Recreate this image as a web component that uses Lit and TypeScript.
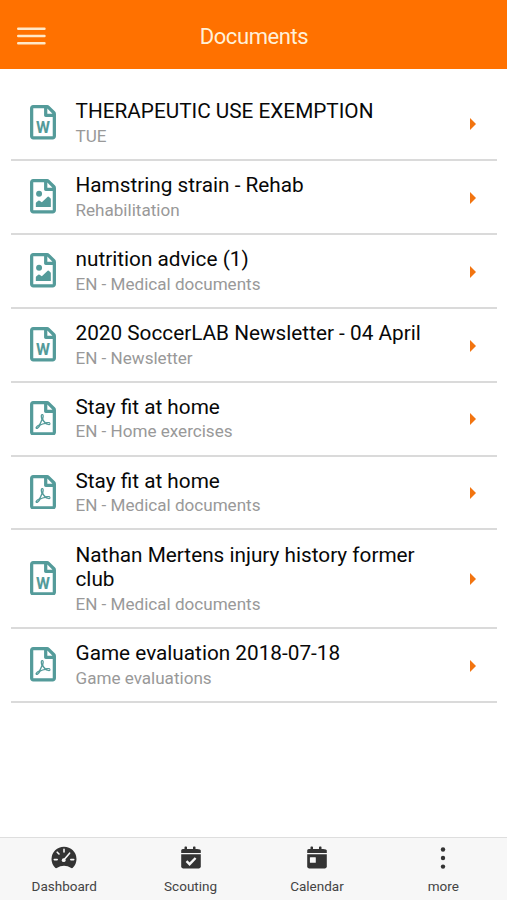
import { LitElement, html, svg, css } from "lit";
import { customElement, property } from "lit/decorators.js";

type Kind = "word" | "image" | "pdf";

const SHEET =
  "M369.9 97.9L286 14C277 5 264.8-.1 252.1-.1H48C21.5 0 0 21.5 0 48v416c0 26.5 21.5 48 48 48h288c26.5 0 48-21.5 48-48V131.9c0-12.7-5.1-25-14.1-34zM332.1 128H256V51.9l76.1 76.1zM48 464V48h160v104c0 13.3 10.7 24 24 24h104v288H48z";
const PDF_MARK =
  "M298.2 320.3c-12.2-12-47-8.7-64.4-6.5-17.2-10.5-28.7-25-36.8-46.3 3.9-16.1 10.1-40.6 5.4-56-4.2-26.2-37.8-23.6-42.6-5.9-4.4 16.1-.4 38.5 7 67.1-10 23.9-24.9 56-35.4 74.4-20 10.3-47 26.2-51 46.2-3.3 15.8 26 55.2 76.1-31.2 22.4-7.4 46.8-16.5 68.4-20.1 18.9 10.2 41 17 55.8 17 25.5 0 28-28.2 17.5-38.7zm-198.1 77.8c5.1-13.7 24.5-29.5 30.4-35-19 30.3-30.4 35.7-30.4 35zm81.6-190.6c7.4 0 6.7 32.1 1.8 40.8-4.4-13.9-4.3-40.8-1.8-40.8zm-24.4 136.6c9.7-16.9 18-37 24.7-54.7 8.3 15.1 18.9 27.2 30.1 35.5-20.8 4.3-38.9 13.1-54.8 19.2zm131.6-5s-5 6-37.3-7.8c35.1-2.6 40.9 5.4 37.3 7.8z";

const marks = {
  word: svg`<text x="191" y="413" text-anchor="middle" class="w">W</text>`,
  image: svg`<circle cx="134" cy="218" r="44"/><path d="M86 414V358q0-10 8-15l28-20q10-7 20 0l26 18q8 4 15-3l74-73q10-9 20-1l25 21q6 5 6 13V414z"/>`,
  pdf: svg`<path d=${PDF_MARK}/>`,
};

@customElement("doc-row")
class DocRow extends LitElement {
  @property() kind: Kind = "word";
  @property() heading = "";
  @property() category = "";

  static styles = css`
    :host {
      display: flex;
      align-items: center;
      padding: 12.2px 20px 10.7px 19px;
      border-bottom: 2px solid #dadada;
    }
    .file { width: 26px; height: 34.6px; flex: none; fill: #549b9a; margin-top: -2.4px; }
    .w { font: bold 236px Roboto, sans-serif; }
    .text { flex: 1; margin-left: 19.5px; max-width: 360px; }
    .heading { font-size: 20.75px; line-height: 24.5px; color: #080808; }
    .category { font-size: 17.1px; line-height: 23.5px; padding-top: 1px; color: #999; letter-spacing: -0.01px; }
    .arrow { width: 6px; height: 12px; margin-left: auto; margin-right: 1px; fill: #f27410; }
  `;

  render() {
    return html`
      <svg class="file" viewBox="0 0 384 512"><path d=${SHEET}></path>${marks[this.kind]}</svg>
      <div class="text">
        <div class="heading">${this.heading}</div>
        <div class="category">${this.category}</div>
      </div>
      <svg class="arrow" viewBox="0 0 6 12"><path d="M0 0L6 6L0 12z"></path></svg>
    `;
  }
}

const docs: [Kind, string, string][] = [
  ["word", "THERAPEUTIC USE EXEMPTION", "TUE"],
  ["image", "Hamstring strain - Rehab", "Rehabilitation"],
  ["image", "nutrition advice (1)", "EN - Medical documents"],
  ["word", "2020 SoccerLAB Newsletter - 04 April", "EN - Newsletter"],
  ["pdf", "Stay fit at home", "EN - Home exercises"],
  ["pdf", "Stay fit at home", "EN - Medical documents"],
  ["word", "Nathan Mertens injury history former club", "EN - Medical documents"],
  ["pdf", "Game evaluation 2018-07-18", "Game evaluations"],
];

const calendarBase = svg`
  <path d="M3.2 7V4.6Q3.2 3 4.8 3H6.5V1.2Q6.5 .4 7.2 .4H8.2Q9 .4 9 1.2V3H15V1.2Q15 .4 15.8 .4H16.8Q17.5 .4 17.5 1.2V3H19.2Q22.8 3 22.8 4.6V7z"/>
  <path d="M3.2 8.3H22.8V20.6Q22.8 22.4 21 22.4H5Q3.2 22.4 3.2 20.6z"/>`;

const tabs = [
  {
    label: "Dashboard",
    icon: svg`
      <path d="M4.2 21.8Q.5 18 .5 13A12.5 12.3 0 0 1 25.5 13Q25.5 18 21.8 21.8Q21.2 22.4 20.3 22Q13 17.6 5.7 22Q4.8 22.4 4.2 21.8z"/>
      <g class="cut"><path d="M13 3.2V6M6.2 6.2L8 8M3.3 13.6H6.2M19.8 13.6H22.7M12.8 14L18.6 7.2"/><circle cx="12.7" cy="14.2" r="1.9"/></g>`,
  },
  { label: "Scouting", icon: svg`${calendarBase}<path class="tick" d="M8.5 15.2L11.6 18.2L17.6 12"/>` },
  { label: "Calendar", icon: svg`${calendarBase}<rect class="day" x="5.9" y="11.2" width="5.9" height="5.6" rx=".5"/>` },
  {
    label: "more",
    icon: svg`<circle cx="13" cy="3.5" r="2.2"/><circle cx="13" cy="12" r="2.2"/><circle cx="13" cy="20.6" r="2.2"/>`,
  },
];

@customElement("app-root")
class AppRoot extends LitElement {
  static styles = css`
    :host {
      display: flex;
      flex-direction: column;
      height: 900px;
      background: #fff;
      font-family: Roboto, sans-serif;
    }
    header {
      display: grid;
      grid-template-columns: 45px 1fr 45px;
      align-items: center;
      height: 69px;
      padding-top: 2px;
      box-sizing: border-box;
      background: #ff7100;
      flex: none;
    }
    .menu { width: 29px; height: 18px; margin-left: 16.5px; stroke: #ffe8c8; stroke-width: 2.4; stroke-linecap: round; }
    h1 { margin: 0; padding: 1px 0 0 1px; text-align: center; font-size: 22px; font-weight: 400; letter-spacing: -0.4px; color: #fff0d8; }
    main { flex: 1; padding: 18.2px 10px 0 11px; }
    nav {
      display: grid;
      grid-template-columns: repeat(4, 126.4px);
      padding-left: 1px;
      height: 63px;
      box-sizing: border-box;
      border-top: 1px solid #dedede;
      background: #f7f7f7;
      flex: none;
    }
    .tab { display: flex; flex-direction: column; align-items: center; padding-top: 8px; font-size: 13.5px; line-height: 18px; color: #444; }
    .tab svg { width: 26px; height: 23px; margin-bottom: 8px; fill: #333; }
    .cut path { stroke: #f7f7f7; stroke-width: 1.6; stroke-linecap: round; }
    .cut circle, .day { fill: #f7f7f7; }
    .tick { fill: none; stroke: #f7f7f7; stroke-width: 2.4; }
  `;

  render() {
    return html`
      <header>
        <svg class="menu" viewBox="0 0 29 18"><path d="M1.2 1.7H27.5M1.2 9H27.5M1.2 16.2H27.5"></path></svg>
        <h1>Documents</h1>
      </header>
      <main>
        ${docs.map(([kind, heading, category]) => html`<doc-row .kind=${kind} .heading=${heading} .category=${category}></doc-row>`)}
      </main>
      <nav>
        ${tabs.map((t) => html`<div class="tab"><svg viewBox="0 0 26 23">${t.icon}</svg><span>${t.label}</span></div>`)}
      </nav>
    `;
  }
}
